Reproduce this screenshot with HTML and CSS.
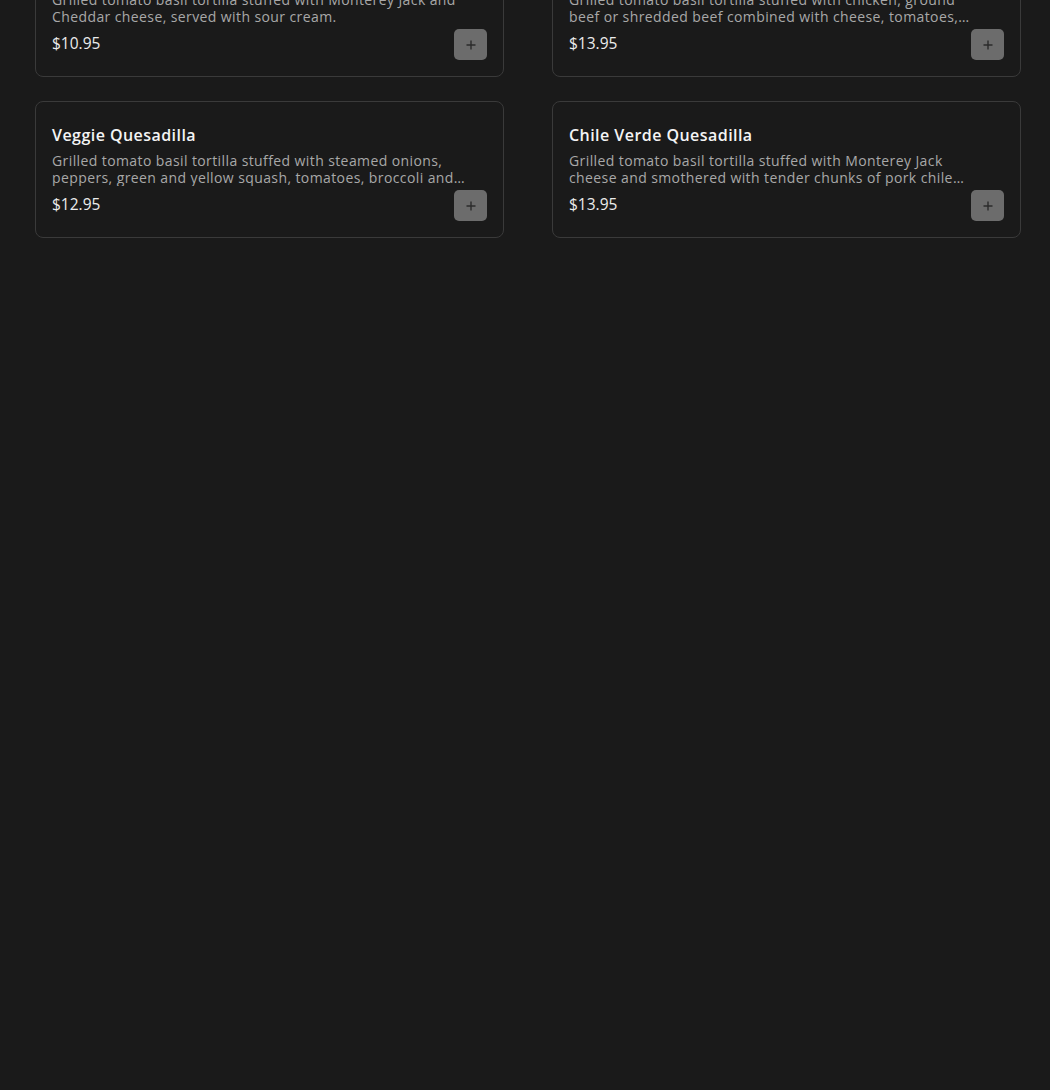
FILE: index.html
```html
<!DOCTYPE html>
<html lang="en">
<head>
<meta charset="utf-8">
<title>Quesadillas</title>
<link rel="stylesheet" href="styles.css">
</head>
<body>
<main class="menu">
  <article class="card">
    <h3 class="card-title">Cheese Quesadilla</h3>
    <p class="card-desc">Grilled tomato basil tortilla stuffed with Monterey Jack and Cheddar cheese, served with sour cream.</p>
    <div class="card-foot">
      <span class="price">$10.95</span>
      <button class="add" aria-label="Add"><svg width="10" height="10" viewBox="0 0 10 10"><path d="M5 0.5v9M0.5 5h9" stroke="#2b2b2b" stroke-width="1.4" fill="none"/></svg></button>
    </div>
  </article>
  <article class="card">
    <h3 class="card-title">Meat Quesadilla</h3>
    <p class="card-desc">Grilled tomato basil tortilla stuffed with chicken, ground beef or shredded beef combined with cheese, tomatoes, onions and peppers, served with sour cream.</p>
    <div class="card-foot">
      <span class="price">$13.95</span>
      <button class="add" aria-label="Add"><svg width="10" height="10" viewBox="0 0 10 10"><path d="M5 0.5v9M0.5 5h9" stroke="#2b2b2b" stroke-width="1.4" fill="none"/></svg></button>
    </div>
  </article>
  <article class="card">
    <h3 class="card-title">Veggie Quesadilla</h3>
    <p class="card-desc">Grilled tomato basil tortilla stuffed with steamed onions, peppers, green and yellow squash, tomatoes, broccoli and carrots.</p>
    <div class="card-foot">
      <span class="price">$12.95</span>
      <button class="add" aria-label="Add"><svg width="10" height="10" viewBox="0 0 10 10"><path d="M5 0.5v9M0.5 5h9" stroke="#2b2b2b" stroke-width="1.4" fill="none"/></svg></button>
    </div>
  </article>
  <article class="card">
    <h3 class="card-title">Chile Verde Quesadilla</h3>
    <p class="card-desc">Grilled tomato basil tortilla stuffed with Monterey Jack cheese and smothered with tender chunks of pork chile verde.</p>
    <div class="card-foot">
      <span class="price">$13.95</span>
      <button class="add" aria-label="Add"><svg width="10" height="10" viewBox="0 0 10 10"><path d="M5 0.5v9M0.5 5h9" stroke="#2b2b2b" stroke-width="1.4" fill="none"/></svg></button>
    </div>
  </article>
</main>
</body>
</html>
```

FILE: styles.css
```css
html, body {
  margin: 0;
  padding: 0;
  background: #1a1a1a;
  height: 100%;
  overflow: hidden;
}
body {
  font-family: "Open Sans", "DejaVu Sans", sans-serif;
  color: #f2f2f2;
}
.menu {
  display: grid;
  grid-template-columns: 469px 469px;
  column-gap: 48px;
  row-gap: 24px;
  margin-top: -60px;
  padding-left: 35px;
}
.card {
  box-sizing: border-box;
  height: 137px;
  border: 1px solid #3a3a3a;
  border-radius: 8px;
  background: #1a1a1a;
  padding: 21px 16px 16px;
  display: flex;
  flex-direction: column;
}
.card-title {
  margin: 0;
  font-size: 16px;
  font-weight: 600;
  line-height: 24px;
  letter-spacing: 0.45px;
  color: #f4f4f4;
}
.card-desc {
  margin: 5px 0 0;
  max-width: 420px;
  font-size: 14px;
  line-height: 17px;
  letter-spacing: 0.4px;
  color: #a8a8a8;
  display: -webkit-box;
  -webkit-line-clamp: 2;
  -webkit-box-orient: vertical;
  overflow: hidden;
}
.card-foot {
  margin-top: auto;
  display: flex;
  justify-content: space-between;
  align-items: flex-start;
}
.price {
  margin-top: 5px;
  font-size: 15.5px;
  line-height: 22px;
  color: #ececec;
}
.add {
  width: 33px;
  height: 31px;
  margin-top: 2px;
  border: none;
  border-radius: 5px;
  background: #6c6c6c;
  display: flex;
  align-items: center;
  justify-content: center;
  padding: 0;
}
```
